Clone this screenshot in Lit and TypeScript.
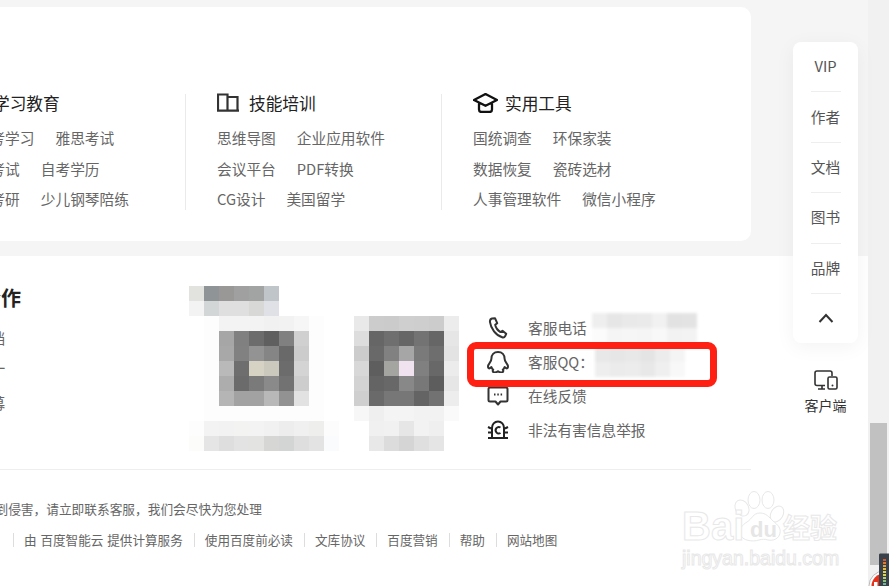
import { LitElement, html, css, svg } from 'lit';
import { customElement } from 'lit/decorators.js';

const W = 'ffffff';
const F = 'fdfdfd';

const mosaicA = [
  ['e2e2df', '8f9497', '9a9897', 'a0a0a0', 'a2a4a4', 'c0c5c9', W, W, W, W],
  ['f3f3f3', 'd3d6d6', 'dfdfe0', 'dfdfe0', 'd8d9d7', 'dfe1e6', W, W, W, W],
  [W, F, 'f3f3f3', 'f3f3f3', 'f3f3f3', 'f1f1f1', 'f2f2f2', 'f6f6f6', F, W],
  [W, F, 'a6a6a6', '808080', '6c6c6c', '5f5f5f', '808080', 'd0d0d0', F, W],
  [W, F, 'a8a8a8', '818181', '939393', '858585', '696969', 'cccccc', F, W],
  [W, F, 'b9b9b9', '6e6e6e', 'd6d3c4', 'cbc8be', '6c6c6c', 'd4d4d4', F, W],
  [W, F, 'adadad', '6b6b6b', '7a7a7a', '8a8a8a', '727272', 'cdcdcd', F, W],
  [W, F, 'b5b5b5', 'a2a2a2', 'a2a2a2', 'b8b8b8', '929292', 'e2e2e2', F, W],
  [W, F, F, F, F, F, F, F, F, W],
  ['fdfdfd', 'f3f3f3', 'f2f2f2', 'f3f3f1', 'f3f3f3', 'f1f1f1', 'ededed', 'f0f0f0', 'eeeeec', 'fcfcfd'],
  ['fcfcfb', 'e5e5e5', 'dedede', 'e3e3e3', 'e3e3e1', 'd6d6d4', 'd3d5d4', 'dedede', 'e3e3e3', 'fafbfd'],
];

const mosaicB = [
  ['e9e9e9', 'cccccc', 'cbcbcb', 'cfcfcf', 'cecece', 'cccccc', 'ececec'],
  ['dddddd', '666666', '6f6f6f', '666666', '737373', '666666', 'e6e6e6'],
  ['cccccc', '696969', '818181', 'a6a6a6', '7a7a7a', '6e6e6e', 'e3e3e3'],
  ['d8d8d8', '5e5e5e', 'a4a4a0', 'f0e2ee', '808080', '686868', 'ececec'],
  ['d3d3d3', '646464', '686868', '888888', '787878', '5d5d5d', 'e6e6e6'],
  ['cfcfcf', '6a6a6a', '777777', '777777', '646464', '727272', 'ededed'],
  ['f7f7f7', 'efefef', 'f4f4f4', 'f4f4f4', 'f2f2f2', 'f2f2f2', 'fafafa'],
  [W, 'f0f0f0', 'f1f1f1', 'e6e6e6', 'f2f2f2', 'efefef', W],
  [W, 'e8e8e8', 'dcdcdc', 'd5d5d5', 'dfdfdf', 'e5e5e5', W],
];

const phoneBlur = [
  ['eeeeee', 'e6e6e6', 'e9e9e9', 'eaeaea', 'f1f1f1', 'e2e2e2', 'e3e3e3'],
  ['fbfbfb', 'f5f5f5', 'f6f6f6', 'f5f5f5', 'f8f8f8', 'f2f2f2', 'f3f3f3'],
];

const qqBlur = [
  ['e8e8e8', 'e6e6e6', 'e8e8e8', 'e4e4e4', 'ececec', 'f4f4f4'],
  ['eeeeee', 'ebebeb', 'ececec', 'e8e8e8', 'efefef', 'f8f8f8'],
];

const bookIcon = svg`<path d="M1 17V1.500h9.500V17M10.500 4H20.500V17M0 17.700h22" fill="none" stroke="#333" stroke-width="2.200"/>`;
const capIcon = svg`<path d="M12.500 1 24 7l-11.500 5.800L1 7zM6 10.500v6c0 1.700 1 2.500 2.500 2.500h8c1.500 0 2.500-.8 2.500-2.500v-6" fill="none" stroke="#111" stroke-width="2.300" stroke-linejoin="round"/>`;

const columns = [
  {
    title: '学习教育', icon: null, rows: [['中高考学习', '雅思考试'], ['会计考试', '自考学历'], ['法硕考研', '少儿钢琴陪练']],
  },
  {
    title: '技能培训', icon: bookIcon, rows: [['思维导图', '企业应用软件'], ['会议平台', 'PDF转换'], ['CG设计', '美国留学']],
  },
  {
    title: '实用工具', icon: capIcon, rows: [['国统调查', '环保家装'], ['数据恢复', '瓷砖选材'], ['人事管理软件', '微信小程序']],
  },
];

const contacts = [
  {
    label: '客服电话',
    icon: svg`<path d="M5 1.500 8 1.200l2.200 5-2 1.600c.6 3 2.800 5.800 5.300 7.300l2-1.300 3.700 3-1 2.200c-.6 1.200-1.800 1.700-3 1.300C8.800 18.300 3.800 11.500 3 5.200c-.2-1.800.6-3.300 2-3.700z" fill="none" stroke="#333" stroke-width="2" stroke-linejoin="round"/>`,
  },
  {
    label: '客服QQ：',
    icon: svg`<path d="M11 1C6.800 1 4.400 4 4.400 7.800c0 1.500-.6 2.600-1.700 4C1.300 13.600.7 15.300 1.200 16.600c.3.800 1 1 1.700.5l1.500-1c.4 1 1 1.900 1.800 2.600-1 1-.4 2.800 1.300 2.800 1.500 0 2.600-.4 3.500-1.300.9.900 2 1.300 3.500 1.300 1.700 0 2.300-1.800 1.300-2.800.8-.7 1.400-1.600 1.800-2.600l1.500 1c.7.500 1.400.3 1.700-.5.5-1.300-.1-3-1.500-4.800-1.100-1.400-1.700-2.500-1.700-4C17.600 4 15.200 1 11 1z" fill="none" stroke="#333" stroke-width="2" stroke-linejoin="round"/>`,
  },
  {
    label: '在线反馈',
    icon: svg`<path d="M3 2.500h16c1 0 1.500.5 1.500 1.500v11c0 1-.5 1.500-1.500 1.500h-5.500L11 19.500l-2.500-3H3c-1 0-1.500-.5-1.500-1.500V4c0-1 .5-1.500 1.500-1.500z" fill="none" stroke="#333" stroke-width="2" stroke-linejoin="round"/><path d="M7 9.500h1.500M10.300 9.500h1.500M13.600 9.500h1.500" stroke="#333" stroke-width="1.800"/>`,
  },
  {
    label: '非法有害信息举报',
    icon: svg`<path d="M5 18V9c0-3.500 2.500-6.500 6-6.500s6 3 6 6.500v9M1 19h20M1 8l3 1.500M21 8l-3 1.500M1 13.500h3.500M21 13.500h-3.500" fill="none" stroke="#222" stroke-width="2"/><path d="M13.500 8.500a3.200 3.200 0 1 0 0 5.500" fill="none" stroke="#222" stroke-width="2"/>`,
  },
];

const legal = ['由 百度智能云 提供计算服务', '使用百度前必读', '文库协议', '百度营销', '帮助', '网站地图'];
const rail = ['VIP', '作者', '文档', '图书', '品牌'];
const leds = ['#d9572e', '#e07a30', '#e4a035', '#e6bd3c', '#e6cf4a', '#d8d45a', '#b8cf6a', '#8fc47c', '#6fb894'];

@customElement('pixel-mosaic')
class PixelMosaic extends LitElement {
  static properties = { rows: { attribute: false } };
  rows: string[][] = [];

  static styles = css`
    :host { display: block; }
    .grid { display: grid; grid-auto-rows: 15px; grid-auto-columns: 15px; }
  `;

  render() {
    return html`<div class="grid">
      ${this.rows.map((row, r) => row.map((c, i) => html`<span style="background:#${c};grid-row:${r + 1};grid-column:${i + 1}"></span>`))}
    </div>`;
  }
}

@customElement('app-root')
class AppRoot extends LitElement {
  static styles = css`
    :host {
      display: block;
      position: relative;
      width: 889px;
      height: 586px;
      overflow: hidden;
      background: #f1f1f1;
      font-family: "Noto Sans CJK SC", "Liberation Sans", sans-serif;
      color: #666;
    }
    .page { width: 868px; height: 586px; background: #f5f5f5; padding-top: 7px; box-sizing: border-box; display: flex; flex-direction: column; }
    .card {
      width: 751px; height: 234px; flex: none; box-sizing: border-box; background: #fff;
      border-radius: 0 10px 10px 0; padding-top: 87px; overflow: hidden;
    }
    .cols { display: flex; margin-left: -71px; }
    .col { width: 256px; height: 116px; box-sizing: border-box; padding-left: 31px; border-left: 1px solid #eaeaea; flex: none; }
    .col-title { display: flex; align-items: center; height: 18px; font-size: 16.700px; color: #222; line-height: 18px; white-space: nowrap; }
    .col-title svg { width: 25px; height: 20px; margin-right: 7px; flex: none; }
    .link-row { display: flex; gap: 21px; height: 30.500px; font-size: 14.700px; line-height: 30.500px; white-space: nowrap; }
    .links { margin-top: 11px; }

    .footer { flex: 1; margin-top: 15px; background: #fff; position: relative; overflow: hidden; }
    .top { display: flex; height: 213px; width: 751px; border-bottom: 1px solid #eee; }
    .partner { width: 228px; margin-left: -39px; flex: none; padding-top: 30px; white-space: nowrap; }
    .partner h3 { margin: 0; font-size: 20px; line-height: 24px; color: #222; font-weight: 700; }
    .partner div { font-size: 14.700px; line-height: 20px; }
    .partner .a { margin-top: 18px; }
    .partner .b { margin-top: 10px; }
    .partner .c { margin-top: 15px; }
    .mos-a { margin-top: 30px; flex: none; }
    .mos-b { margin: 60px 0 0 15px; flex: none; }
    .contacts { margin-top: 55px; margin-left: 28px; display: flex; flex-direction: column; }
    .contact { height: 34px; display: flex; align-items: center; font-size: 14.700px; line-height: 20px; white-space: nowrap; }
    .contact svg { width: 22px; height: 22px; margin-right: 19px; flex: none; }
    .contact pixel-mosaic { margin-left: 5px; filter: blur(1.500px); }
    .contact .qq { margin-left: 1px; }
    .legal { padding-top: 28px; font-size: 12.600px; white-space: nowrap; }
    .notice { height: 22px; line-height: 22px; margin-left: -106px; font-size: 12.700px; }
    .bar { display: flex; align-items: center; height: 20px; margin-top: 10px; margin-left: 13px; }
    .bar span { border-left: 1px solid #ddd; padding-left: 10px; margin-right: 11px; height: 14px; line-height: 14px; }
    .bar span:first-child { word-spacing: 1px; }

    .rail {
      position: absolute; left: 793px; top: 42px; width: 65px; height: 301px; background: #fff;
      border-radius: 8px; box-shadow: 0 4px 20px rgba(0, 0, 0, .05); display: flex; flex-direction: column; align-items: center;
    }
    .rail-item {
      width: 30px; height: 50.400px; flex: none; border-bottom: 1px solid #eee; box-sizing: border-box; padding-bottom: 2px;
      display: flex; align-items: center; justify-content: center; font-size: 14.700px; color: #555; white-space: nowrap;
    }
    .rail-up { border-bottom: 0; }
    .client {
      position: absolute; left: 793px; top: 370px; width: 65px; display: flex; flex-direction: column; align-items: center;
      font-size: 14px; color: #333; line-height: 18px; gap: 6px; white-space: nowrap;
    }
    .mark {
      position: absolute; left: 467px; top: 342px; width: 250px; height: 45px; box-sizing: border-box;
      border: 7px solid #fe2012; border-radius: 9px;
    }
    .scroll { position: absolute; left: 870px; top: 423px; width: 17px; height: 142px; background: #c1c1c1; }
    .widget { position: absolute; left: 860px; top: 550px; width: 29px; height: 36px; }

    .wm {
      position: absolute; left: 682px; top: 490px; width: 160px; height: 80px; color: #fff;
      -webkit-text-stroke: 1px #e8e8e8; font-family: "Liberation Sans", sans-serif;
    }
    .wm svg { position: absolute; left: 0; top: 0; width: 160px; height: 56px; }
    .wm .bai { position: absolute; left: 0; top: 16px; font-size: 40px; line-height: 40px; font-weight: 700; }
    .wm .du { position: absolute; left: 68px; top: 29px; font-size: 22px; line-height: 22px; font-weight: 700; -webkit-text-stroke: 0; color: #e6e6e6; }
    .wm .cn { position: absolute; left: 101px; top: 21px; font-size: 27px; line-height: 32px; font-weight: 700; font-family: "Noto Sans CJK SC", sans-serif; white-space: nowrap; }
    .wm .url { position: absolute; left: 0; top: 56px; font-size: 19.500px; line-height: 24px; white-space: nowrap; }
  `;

  render() {
    return html`
      <div class="page">
        <section class="card">
          <div class="cols">
            ${columns.map((c) => html`
              <div class="col">
                <div class="col-title">
                  <svg viewBox="0 0 25 20">${c.icon}</svg>${c.title}
                </div>
                <div class="links">
                  ${c.rows.map((r) => html`<div class="link-row">${r.map((t) => html`<span>${t}</span>`)}</div>`)}
                </div>
              </div>
            `)}
          </div>
        </section>
        <section class="footer">
          <div class="top">
            <div class="partner">
              <h3>找合作</h3>
              <div class="a">传文档</div>
              <div class="b">开第一</div>
              <div class="c">来招募</div>
            </div>
            <pixel-mosaic class="mos-a" .rows=${mosaicA}></pixel-mosaic>
            <pixel-mosaic class="mos-b" .rows=${mosaicB}></pixel-mosaic>
            <div class="contacts">
              ${contacts.map((c, i) => html`
                <div class="contact">
                  <svg viewBox="0 0 22 22">${c.icon}</svg>${c.label}
                  ${i === 0 ? html`<pixel-mosaic .rows=${phoneBlur}></pixel-mosaic>` : ''}
                  ${i === 1 ? html`<pixel-mosaic class="qq" .rows=${qqBlur}></pixel-mosaic>` : ''}
                </div>
              `)}
            </div>
          </div>
          <div class="legal">
            <div class="notice">如发现您的权益受到侵害，请立即联系客服，我们会尽快为您处理</div>
            <div class="bar">${legal.map((t) => html`<span>${t}</span>`)}</div>
          </div>
        </section>
      </div>

      <aside class="rail">
        ${rail.map((t) => html`<div class="rail-item">${t}</div>`)}
        <div class="rail-item rail-up">
          <svg width="16" height="10" viewBox="0 0 16 10"><path d="M1.500 9 8 2l6.500 7" fill="none" stroke="#333" stroke-width="2"/></svg>
        </div>
      </aside>
      <div class="client">
        <svg width="24" height="20" viewBox="0 0 24 20">
          <path d="M11 15.500H3c-1.200 0-2-.8-2-2V3c0-1.200.8-2 2-2h13c1.200 0 2 .8 2 2v3M8 15.500v3M4 19h7" fill="none" stroke="#333" stroke-width="1.600"/>
          <rect x="14" y="7" width="9" height="12" rx="1.500" fill="#fff" stroke="#333" stroke-width="1.600"/>
          <circle cx="18.500" cy="15.500" r="1" fill="#333"/>
        </svg>
        <span>客户端</span>
      </div>

      <div class="mark"></div>

      <div class="wm">
        <svg viewBox="0 0 160 56">
          <g fill="#fff" stroke="#e8e8e8" stroke-width="1">
            <ellipse cx="60" cy="18" rx="6.500" ry="8.500" transform="rotate(-30 60 18)"/>
            <ellipse cx="72" cy="10" rx="6" ry="8.500"/>
            <ellipse cx="86" cy="10" rx="6" ry="8.500"/>
            <ellipse cx="95" cy="24" rx="6" ry="8.500" transform="rotate(30 95 24)"/>
            <path d="M78 23c6 0 9 4 13 8 5 4 8 7 7 12-1 6-7 8-12 7-3-1-6-1-9 0-6 2-17 1-19-6-1-5 2-9 7-12 5-3 6-9 13-9z"/>
          </g>
        </svg>
        <span class="bai">Bai</span><span class="du">du</span>
        <span class="cn">经验</span>
        <span class="url">jingyan.baidu.com</span>
      </div>

      <div class="scroll"></div>
      <svg class="widget" viewBox="0 0 29 36">
        <circle cx="24" cy="36" r="15" fill="#fff" stroke="#b9b9b9" stroke-width="1"/>
        <circle cx="24" cy="36" r="12.500" fill="#e8331c"/>
        <rect x="14" y="32" width="3.500" height="4" fill="#fff"/>
        <path d="M19 5c0-1 .5-1.500 1.500-1.500H29V36H19z" fill="#39424a"/>
        ${leds.map((c, i) => svg`<rect x="23" y=${9 + i * 3} width="3" height="2" fill=${c}/>`)}
      </svg>
    `;
  }
}
